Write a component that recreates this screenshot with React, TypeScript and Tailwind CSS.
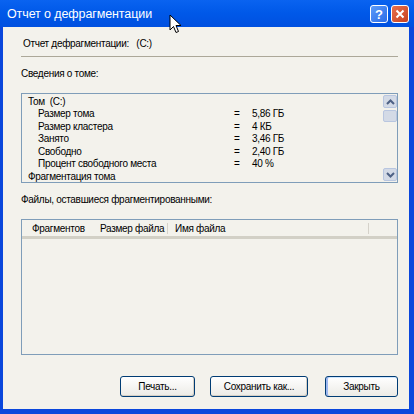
import React from "react";

const rows: { label: string; value?: string; indent: boolean }[] = [
  { label: "Том  (C:)", indent: false },
  { label: "Размер тома", value: "5,86 ГБ", indent: true },
  { label: "Размер кластера", value: "4 КБ", indent: true },
  { label: "Занято", value: "3,46 ГБ", indent: true },
  { label: "Свободно", value: "2,40 ГБ", indent: true },
  { label: "Процент свободного места", value: "40 %", indent: true },
  { label: "Фрагментация тома", indent: false },
];

function ScrollBtn({ dir }: { dir: "up" | "down" }) {
  return (
    <div className="w-[14px] h-[13px] rounded-[2px] border border-[#B8C6E0] bg-[#D3DAE6] flex items-center justify-center">
      <svg width="9" height="6" viewBox="0 0 9 6">
        {dir === "up" ? (
          <path d="M1 5 L4.5 1.5 L8 5" stroke="#4D6185" strokeWidth="2" fill="none" />
        ) : (
          <path d="M1 1 L4.5 4.5 L8 1" stroke="#4D6185" strokeWidth="2" fill="none" />
        )}
      </svg>
    </div>
  );
}

function Btn({ label, w, def }: { label: string; w: string; def?: boolean }) {
  return (
    <div
      className={`${w} h-[21px] rounded-[3px] border border-[#003C74] bg-gradient-to-b from-[#FFFFFF] to-[#ECEBE6] flex items-center justify-center whitespace-nowrap ${
        def ? "shadow-[inset_2px_0_0_#9DB8F0,inset_0_1px_0_#CEE7FF]" : "shadow-[inset_-1px_-1px_0_#D6D0C5]"
      }`}
    >
      {label}
    </div>
  );
}

export default function App() {
  return (
    <div
      className="relative w-[414px] h-[414px] bg-[#0A47DC] flex flex-col overflow-hidden"
      style={{ fontFamily: '"Liberation Sans", Arial, sans-serif' }}
    >
      {/* Title bar */}
      <div className="h-[27px] bg-gradient-to-b from-[#0A63F0] via-[#0058E8] to-[#0050E0] flex items-center pl-[7px] pr-[5px]">
        <span className="text-white text-[12.5px] leading-[15px] tracking-[-0.1px] flex-1 mt-[1px]">Отчет о дефрагментации</span>
        <div className="w-[18px] h-[18px] rounded-[3px] border border-white bg-gradient-to-br from-[#5C9BF8] to-[#2A6BE8] flex items-center justify-center mr-[3px] mt-[1px]">
          <span className="text-white text-[13px] font-bold leading-none">?</span>
        </div>
        <div className="w-[18px] h-[18px] rounded-[3px] border border-white bg-gradient-to-br from-[#E8704C] to-[#C6401E] flex items-center justify-center mt-[1px]">
          <svg width="10" height="10" viewBox="0 0 10 10">
            <path d="M1.5 1.5 L8.5 8.5 M8.5 1.5 L1.5 8.5" stroke="white" strokeWidth="2" />
          </svg>
        </div>
      </div>

      {/* Body */}
      <div className="flex-1 ml-[3px] mr-[5px] mb-[5px] bg-[#F3F2EC] flex flex-col pl-[18px] pr-[11px] pt-[10px] text-[10px] leading-[13px] tracking-[-0.3px] text-black">
        <div className="pl-[2px] whitespace-pre">Отчет дефрагментации:   (C:)</div>
        <div className="mt-[6px] h-[1px] bg-[#ACA899]" />
        <div className="mt-[10px]">Сведения о томе:</div>

        {/* Volume list */}
        <div className="mt-[13px] h-[90px] border border-[#7F9DB9] bg-[#F3F2EC] flex">
          <div className="flex-1 pt-[1.5px]">
            {rows.map((r, i) => (
              <div key={i} className="h-[12.5px] leading-[12.5px] flex whitespace-pre">
                <span className={r.indent ? "pl-[16px] w-[212px]" : "pl-[6px] w-[212px]"}>{r.label}</span>
                {r.value && (
                  <>
                    <span className="w-[18px]">=</span>
                    <span>{r.value}</span>
                  </>
                )}
              </div>
            ))}
          </div>
          <div className="w-[14px] flex flex-col pt-[1px] pb-[1px]">
            <ScrollBtn dir="up" />
            <div className="mt-[2px] w-[14px] h-[12px] rounded-[2px] border border-[#B8C6E0] bg-[#D3DAE6]" />
            <div className="flex-1" />
            <ScrollBtn dir="down" />
          </div>
        </div>

        <div className="mt-[10px]">Файлы, оставшиеся фрагментированными:</div>

        {/* Files list */}
        <div className="mt-[13px] h-[136px] border border-[#7F9DB9] bg-[#F3F2EC] flex flex-col">
          <div className="h-[16px] flex items-center pt-[1px] whitespace-nowrap">
            <span className="pl-[10px] w-[78px]">Фрагментов</span>
            <span className="w-[67px]">Размер файла</span>
            <span className="w-[1px] h-[11px] bg-[#D5D2CA]" />
            <span className="pl-[7px] w-[200px]">Имя файла</span>
            <span className="w-[1px] h-[11px] bg-[#D5D2CA]" />
          </div>
          <div className="h-[3px] bg-[#D2D0C6]" />
          <div className="flex-1" />
        </div>

        {/* Buttons */}
        <div className="mt-[21px] flex justify-end">
          <Btn label="Печать..." w="w-[75px]" />
          <div className="w-[15px]" />
          <Btn label="Сохранить как..." w="w-[98px]" />
          <div className="w-[17px]" />
          <Btn label="Закрыть" w="w-[73px]" def />
        </div>
      </div>

      {/* Mouse cursor */}
      <svg className="absolute left-[169px] top-[14px]" width="13" height="20" viewBox="0 0 13 20">
        <path d="M1 1 L1 16 L4.5 12.5 L7 18.5 L9.5 17.5 L7 11.5 L12 11.5 Z" fill="white" stroke="black" strokeWidth="1" strokeLinejoin="miter" />
      </svg>
    </div>
  );
}
